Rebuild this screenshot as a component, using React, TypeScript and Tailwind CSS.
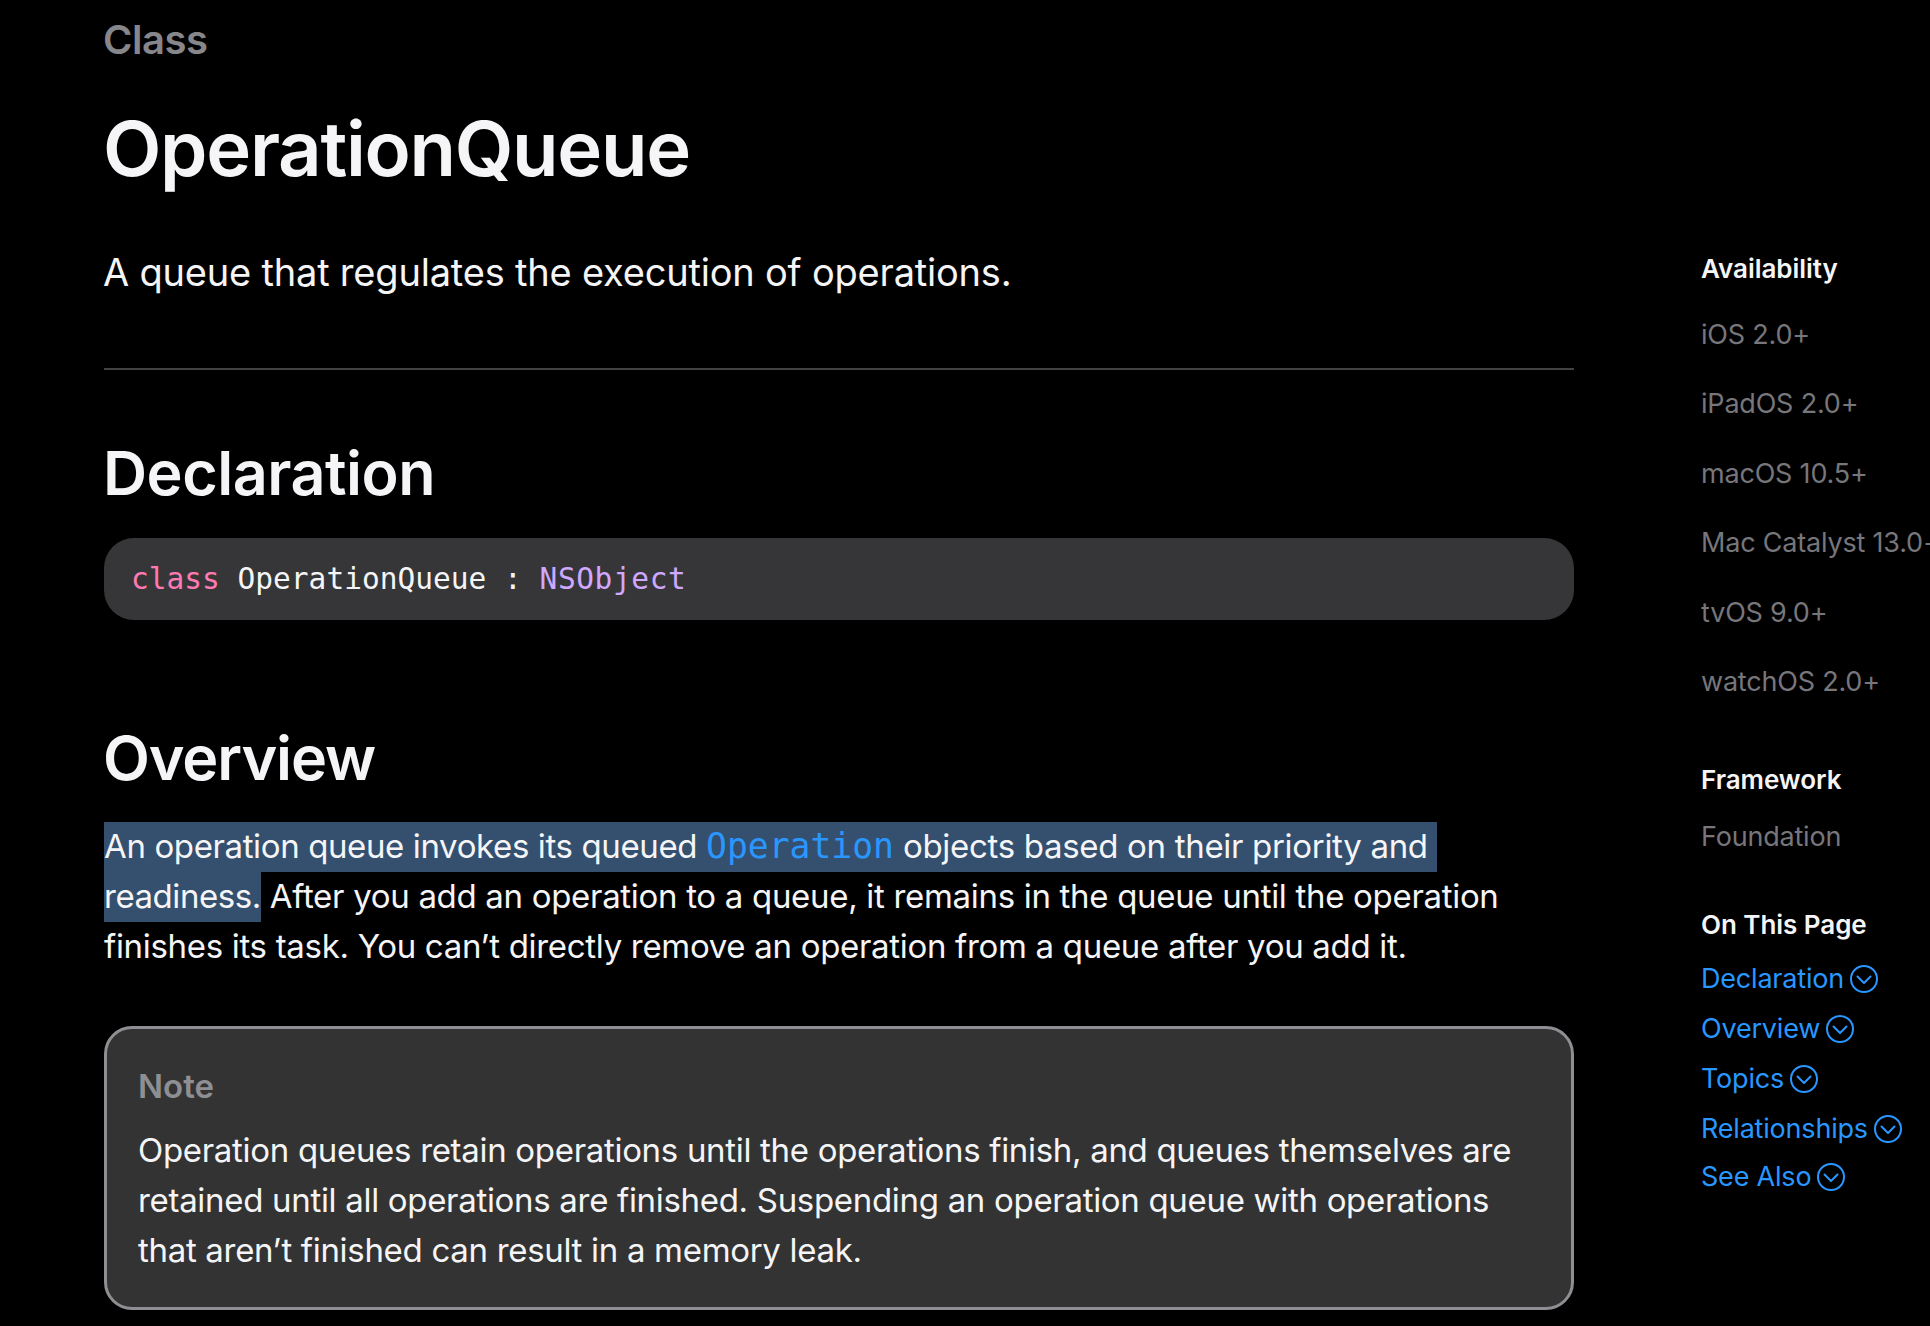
const sans = "font-['Inter','Noto_Sans',sans-serif]";

const platforms = ["iOS 2.0+", "iPadOS 2.0+", "macOS 10.5+", "Mac Catalyst 13.0+", "tvOS 9.0+", "watchOS 2.0+"];
const sections = ["Declaration", "Overview", "Topics", "Relationships", "See Also"];

function CircleChevron() {
  return (
    <svg width="28" height="28" viewBox="0 0 28 28" fill="none" stroke="currentColor" strokeWidth="2" className="ml-[6px] shrink-0">
      <circle cx="14" cy="14" r="13" />
      <path d="M7.5 11.5l6.5 6.5 6.5-6.5" strokeLinecap="round" strokeLinejoin="round" />
    </svg>
  );
}

function Sidebar() {
  return (
    <aside className="ml-[127px] w-[229px] shrink-0 pt-[252px] overflow-hidden">
      <h3 className="text-[26px] leading-[34px] font-semibold text-[#f5f5f7] tracking-[-0.05px]">Availability</h3>
      <ul className="mt-[32px] flex flex-col gap-[35.4px] text-[27px] leading-[34px] text-[#76767b] tracking-[-0.2px] whitespace-nowrap">
        {platforms.map((p) => (
          <li key={p}>{p}</li>
        ))}
      </ul>
      <h3 className="mt-[64px] text-[26px] leading-[34px] font-semibold text-[#f5f5f7] tracking-[-0.05px]">Framework</h3>
      <p className="mt-[23px] text-[27px] leading-[34px] text-[#76767b] tracking-[-0.2px]">Foundation</p>
      <h3 className="mt-[54px] text-[26px] leading-[34px] font-semibold text-[#f5f5f7] tracking-[-0.05px]">On This Page</h3>
      <ul className="mt-[12px] flex flex-col text-[27px] leading-[50px] text-[#2997ff] tracking-[-0.2px]">
        {sections.map((s) => (
          <li key={s} className="flex items-center whitespace-nowrap last:-mt-[2px]">
            {s}
            <CircleChevron />
          </li>
        ))}
      </ul>
    </aside>
  );
}

export default function App() {
  return (
    <div className={`${sans} flex h-[1326px] w-[1930px] overflow-hidden bg-black antialiased`}>
      <main className="ml-[103px] w-[1471px] shrink-0">
        <p className="text-[40px] leading-[48px] font-semibold text-[#86868b] tracking-[-0.5px] mt-[16px]">Class</p>
        <h1 className="mt-[42px] text-[76px] leading-[84px] font-semibold text-[#f5f5f7] tracking-[-1.3px]">OperationQueue</h1>
        <p className="mt-[57px] text-[38px] leading-[50px] text-[#f5f5f7] tracking-[-0.2px]">A queue that regulates the execution of operations.</p>
        <hr className="mt-[71px] ml-[1px] border-t-2 border-[#424245]" />
        <h2 className="mt-[65px] text-[61px] leading-[76px] font-semibold text-[#f5f5f7] tracking-[-0.47px]">Declaration</h2>
        <div className="mt-[27px] ml-[1px] flex h-[82px] items-center rounded-[30px] bg-[#363638] pl-[27px] font-['DejaVu_Sans_Mono',monospace] text-[29.5px] text-[#f5f5f7]">
          <span className="text-[#ff7ab2]">class</span>
          <span className="whitespace-pre"> OperationQueue : </span>
          <span className="text-[#d0a8ff] tracking-[0.6px]">NSObject</span>
        </div>
        <h2 className="mt-[100px] text-[61px] leading-[76px] font-semibold text-[#f5f5f7] tracking-[-1.1px]">Overview</h2>
        <div className="mt-[26px] ml-[1px] text-[33px] leading-[48px] text-[#f5f5f7] tracking-[-0.31px] whitespace-nowrap">
          <div className="h-[50px]">
            <span className="inline-block h-[50px] bg-[#34506e] pr-[9px]">
              <span className="tracking-[-0.38px]">An operation queue invokes its queued </span>
              <span className="font-['DejaVu_Sans_Mono',monospace] text-[#2997ff] tracking-normal text-[34.7px]">Operation</span> objects based on their priority and
            </span>
          </div>
          <div className="h-[50px]">
            <span className="inline-block h-[50px] bg-[#34506e] pr-[0px] tracking-[-0.45px]">readiness.</span> After you add an operation to a queue, it remains in the queue until the operation
          </div>
          <div className="h-[50px]">finishes its task. You can’t directly remove an operation from a queue after you add it.</div>
        </div>
        <div className="mt-[54px] ml-[1px] h-[284px] rounded-[28px] border-[3px] border-[#8e8e93] bg-[#333333] px-[31px] pt-[35px]">
          <p className="text-[33px] leading-[44px] font-semibold text-[#8e8e93]">Note</p>
          <p className="mt-[17px] text-[33px] leading-[50px] text-[#f5f5f7] tracking-[-0.31px] whitespace-nowrap">
            Operation queues retain operations until the operations finish, and queues themselves are
            <br />
            retained until all operations are finished. Suspending an operation queue with operations
            <br />
            that aren’t finished can result in a memory leak.
          </p>
        </div>
      </main>
      <Sidebar />
    </div>
  );
}
